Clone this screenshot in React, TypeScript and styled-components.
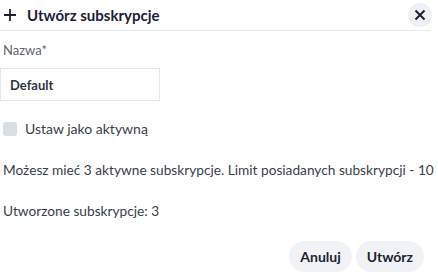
import React from "react";
import styled, { createGlobalStyle } from "styled-components";

const GlobalStyle = createGlobalStyle`
  html, body {
    margin: 0;
    padding: 0;
    background: #ffffff;
  }
  body {
    font-family: Lato, "Noto Sans", sans-serif;
    color: #2f3441;
  }
`;

const Dialog = styled.div`
  width: 438px;
  height: 276px;
  display: flex;
  flex-direction: column;
  box-sizing: border-box;
`;

const Header = styled.div`
  display: flex;
  align-items: center;
  justify-content: space-between;
  height: 30px;
  margin-right: 8px;
  padding: 0 0 0 4px;
  border-bottom: 1px solid #e8eaee;
`;

const Title = styled.h2`
  display: flex;
  align-items: center;
  gap: 11px;
  margin: 0;
  font-size: 15px;
  font-weight: 700;
  color: #1c2233;

  svg {
    flex: none;
  }
`;

const CloseButton = styled.button`
  width: 24px;
  height: 24px;
  border: none;
  border-radius: 50%;
  background: #eef0f4;
  display: flex;
  align-items: center;
  justify-content: center;
  padding: 0;
  margin-right: -2px;
  color: #1c2233;
`;

const Body = styled.div`
  flex: 1;
  display: flex;
  flex-direction: column;
  padding: 11px 3px 0;
`;

const Label = styled.label`
  font-size: 13px;
  color: #5f6673;
`;

const Input = styled.div`
  box-sizing: border-box;
  width: 160px;
  height: 33px;
  margin: 10px 0 0 -3px;
  padding: 0 9px;
  border: 1px solid #e6e8ec;
  display: flex;
  align-items: center;
  font-size: 13px;
  font-weight: 700;
  color: #2f3441;
`;

const CheckRow = styled.div`
  display: flex;
  align-items: center;
  gap: 8px;
  margin-top: 19px;
  font-size: 14px;
  color: #3a3f4b;
`;

const Box = styled.span`
  width: 14px;
  height: 14px;
  border-radius: 3px;
  background: #d9dee5;
`;

const Text = styled.p<{ $top: number }>`
  margin: ${(p) => p.$top}px 0 0;
  font-size: 13.7px;
  white-space: nowrap;
  color: #3a3f4b;
`;

const Footer = styled.div`
  display: flex;
  justify-content: flex-end;
  gap: 4px;
  padding: 0 14px 4px 0;
  margin-top: auto;
`;

const Button = styled.button`
  height: 31px;
  padding: 0 11px;
  border: none;
  border-radius: 16px;
  background: #f1f2f5;
  font-family: Lato, "Noto Sans", sans-serif;
  font-size: 14px;
  font-weight: 700;
  color: #1c2233;
`;

export default function App() {
  return (
    <>
      <GlobalStyle />
      <Dialog>
        <Header>
          <Title>
            <svg width="12" height="12" viewBox="0 0 12 12">
              <path d="M6 0v12M0 6h12" stroke="#1c2233" strokeWidth="1.8" />
            </svg>
            Utwórz subskrypcje
          </Title>
          <CloseButton>
            <svg width="12" height="12" viewBox="0 0 12 12">
              <path d="M1.5 1.5l9 9M10.5 1.5l-9 9" stroke="#1c2233" strokeWidth="2" />
            </svg>
          </CloseButton>
        </Header>
        <Body>
          <Label>Nazwa*</Label>
          <Input>Default</Input>
          <CheckRow>
            <Box />
            Ustaw jako aktywną
          </CheckRow>
          <Text $top={24}>
            Możesz mieć 3 aktywne subskrypcje. Limit posiadanych subskrypcji - 10
          </Text>
          <Text $top={24}>Utworzone subskrypcje: 3</Text>
        </Body>
        <Footer>
          <Button>Anuluj</Button>
          <Button>Utwórz</Button>
        </Footer>
      </Dialog>
    </>
  );
}
